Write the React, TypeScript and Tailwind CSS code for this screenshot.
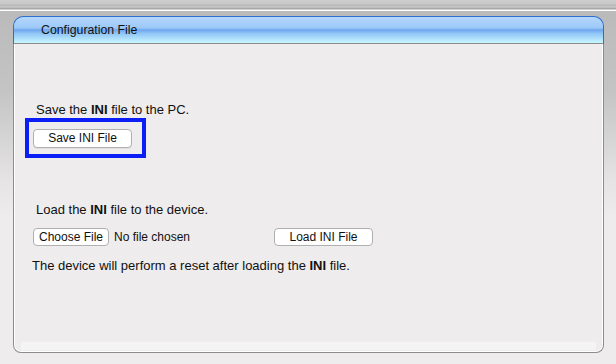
export default function App() {
  return (
    <div className="flex h-[364px] w-[616px] flex-col overflow-hidden bg-[linear-gradient(to_bottom,#b9b9b9_0%,#c4c4c4_25%,#e6e4e4_50%,#eeecec_60%,#eeecec_100%)] font-['Liberation_Sans',Arial,sans-serif] text-[12px] text-[#111]">
      {/* top strip */}
      <div className="h-[11px] w-full shrink-0 bg-[linear-gradient(to_bottom,#cecece_0px,#c8c8c8_4px,#b6b6b6_5px,#c9c9c9_7px,#9d9d9d_9px,#ffffff_10px,#ffffff_11px)]" />

      <div className="ml-[13px] mt-[5px] w-[591px]">
        {/* header */}
        <div className="flex h-[28px] items-center rounded-t-[10px] border-x border-t border-b border-x-[#2f6dd0] border-t-[#2f6dd0] border-b-[#8a8a8a] bg-[linear-gradient(to_bottom,#b5d8fc_0%,#9cc8f8_42%,#6ea6ec_50%,#8ec3f6_62%,#c9f7ff_100%)] pl-[27px]">
          <span className="text-[12.3px] leading-[15px]">Configuration File</span>
        </div>

        {/* body */}
        <div className="flex h-[309px] flex-col rounded-b-[8px] border-x border-b border-[#8c8c8c] bg-[#eeecec] shadow-[inset_1px_0_0_#fff,inset_-1px_0_0_#fff,inset_0_-1px_0_#fff]">
          <p className="ml-[22px] mt-[58px] text-[13px] leading-[15px]">
            Save the <b>INI</b> file to the PC.
          </p>

          <div className="ml-[11px] mt-[1px] h-[40px] w-[121px] border-4 border-[#0b1ef6] pl-[4px] pt-[7px]">
            <button className="h-[19px] w-[99px] rounded-[4px] border border-[#b0b0b0] bg-white text-[12px] leading-[17px] shadow-[0_1px_0_rgba(0,0,0,0.05)]">
              Save INI File
            </button>
          </div>

          <p className="ml-[22px] mt-[44px] text-[13px] leading-[15px]">
            Load the <b>INI</b> file to the device.
          </p>

          <div className="ml-[19px] mt-[11px] flex items-center">
            <button className="h-[18px] w-[76px] rounded-[4px] border border-[#b0b0b0] bg-white text-[12px] leading-[16px]">
              Choose File
            </button>
            <span className="ml-[5px] w-[160px] leading-[15px]">No file chosen</span>
            <button className="h-[18px] w-[99px] rounded-[4px] border border-[#b0b0b0] bg-white text-[12px] leading-[16px]">
              Load INI File
            </button>
          </div>

          <p className="ml-[18px] mt-[12px] text-[13px] leading-[15px]">
            The device will perform a reset after loading the <b>INI</b> file.
          </p>

          <div className="mx-[7px] mb-[2px] mt-auto h-[8px] bg-[#f4f4f4]" />
        </div>
      </div>
    </div>
  );
}
